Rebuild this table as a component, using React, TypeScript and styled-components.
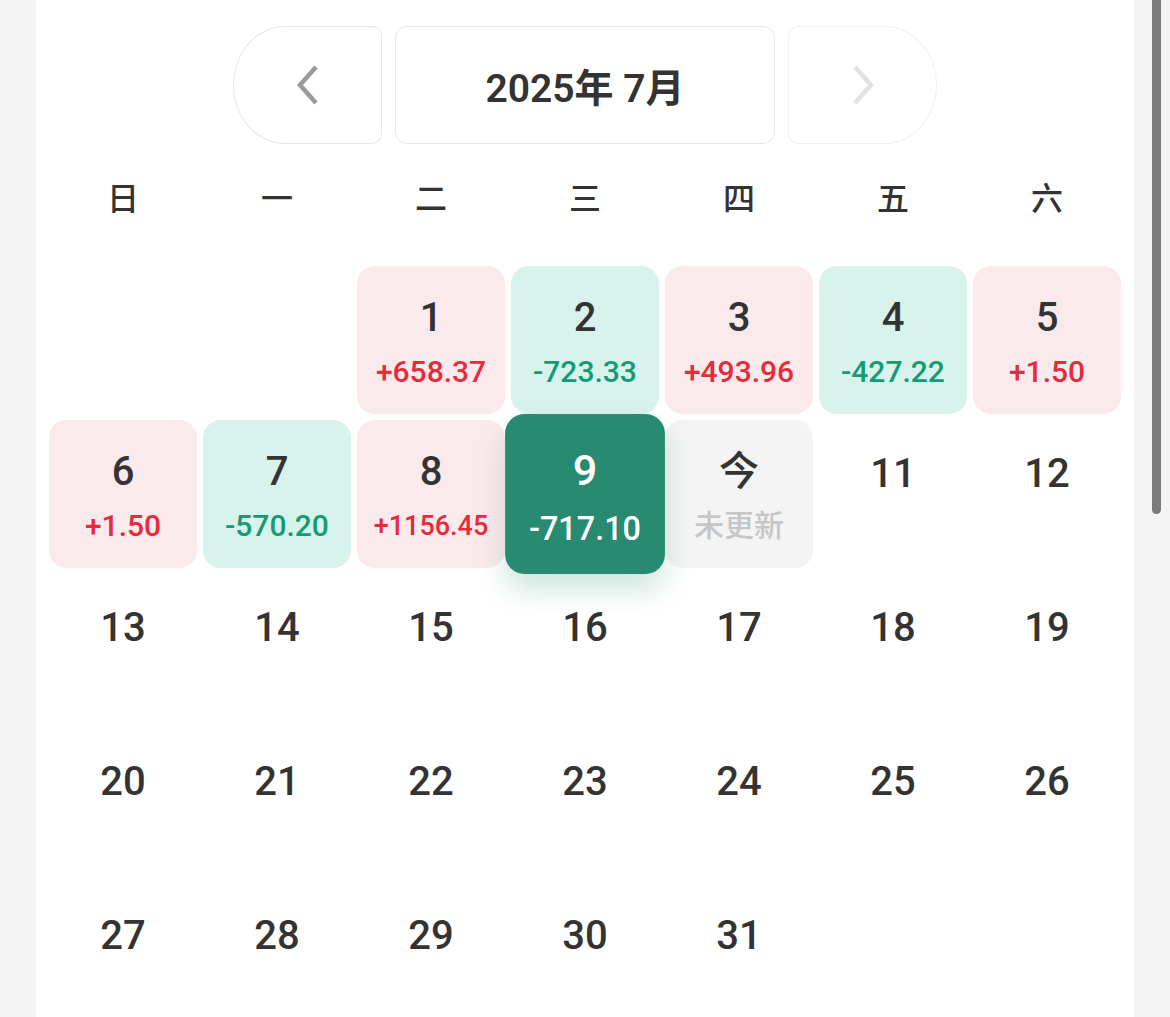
import React from "react";
import styled, { createGlobalStyle, css } from "styled-components";

const Global = createGlobalStyle`
  html, body {
    margin: 0;
    padding: 0;
    background: #f4f4f4;
    overflow: hidden;
  }
  body {
    font-family: Roboto, "Noto Sans CJK SC", "Noto Sans", sans-serif;
    color: #333;
  }
`;

const Page = styled.div`
  display: flex;
  min-height: 1017px;
`;

const Panel = styled.div`
  margin-left: 36px;
  width: 1098px;
  min-height: 1017px;
  background: #fff;
  box-sizing: border-box;
  padding: 26px 13px 0 13px;
`;

const ScrollThumb = styled.div`
  position: fixed;
  left: 1152px;
  top: 0;
  width: 9px;
  height: 514px;
  background: #7b7b7b;
  border-radius: 0 0 5px 5px;
`;

const Header = styled.div`
  display: flex;
  justify-content: center;
  gap: 13px;
  height: 118px;
`;

const NavButton = styled.button<{ $side: "left" | "right"; $disabled?: boolean }>`
  width: 149px;
  height: 118px;
  box-sizing: border-box;
  background: #fff;
  border: 1px solid ${(p) => (p.$disabled ? "#f1f1f1" : "#e6e6e6")};
  padding: 0;
  display: flex;
  align-items: center;
  justify-content: center;
  ${(p) =>
    p.$side === "left"
      ? css`
          border-radius: 52px 10px 10px 52px / 59px 10px 10px 59px;
        `
      : css`
          border-radius: 10px 52px 52px 10px / 10px 59px 59px 10px;
        `}
`;

const Title = styled.div`
  width: 380px;
  height: 118px;
  box-sizing: border-box;
  border: 1px solid #e6e6e6;
  border-radius: 12px;
  display: flex;
  align-items: center;
  justify-content: center;
  font-size: 39px;
  font-weight: 600;
  color: #333;
`;

const Weekdays = styled.div`
  display: grid;
  grid-template-columns: repeat(7, 148px);
  column-gap: 6px;
  margin-top: 26px;
  height: 52px;
`;

const Weekday = styled.div`
  display: flex;
  align-items: center;
  justify-content: center;
  font-size: 32px;
  font-weight: 500;
  color: #333;
`;

const Grid = styled.div`
  display: grid;
  grid-template-columns: repeat(7, 148px);
  grid-auto-rows: 148px;
  gap: 6px;
  margin-top: 44px;
`;

type Tone = "up" | "down" | "today" | "none" | "selected";

const toneBg: Record<Tone, string> = {
  up: "#fbeaeb",
  down: "#d8f3ec",
  today: "#f4f4f4",
  none: "transparent",
  selected: "#288a71",
};

const Cell = styled.div<{ $tone: Tone }>`
  box-sizing: border-box;
  border-radius: 18px;
  background: ${(p) => toneBg[p.$tone]};
  display: flex;
  flex-direction: column;
  align-items: center;
  padding-top: ${(p) => (p.$tone === "none" ? "30px" : "28px")};
  ${(p) =>
    p.$tone === "selected" &&
    css`
      transform: scale(1.08);
      box-shadow: 0 14px 26px rgba(40, 138, 113, 0.22);
      position: relative;
      z-index: 1;
      padding-top: 29px;
    `}
`;

const DayNum = styled.div<{ $light?: boolean }>`
  height: 48px;
  line-height: 48px;
  font-size: 40px;
  font-weight: 500;
  color: ${(p) => (p.$light ? "#fff" : "#333")};
`;

const Amount = styled.div<{ $tone: Tone; $small?: boolean }>`
  margin-top: 10px;
  height: 40px;
  line-height: 40px;
  font-size: ${(p) => (p.$small ? "27px" : "30px")};
  font-weight: 500;
  color: ${(p) =>
    p.$tone === "up"
      ? "#e52b3c"
      : p.$tone === "down"
      ? "#139b73"
      : p.$tone === "selected"
      ? "#fff"
      : "#c6c6c6"};
`;

const Chevron = ({ dir, color }: { dir: "left" | "right"; color: string }) => (
  <svg width="28" height="40" viewBox="0 0 28 40" fill="none">
    <path
      d={dir === "left" ? "M22 2 L6 20 L22 38" : "M6 2 L22 20 L6 38"}
      stroke={color}
      strokeWidth="4.5"
      strokeLinecap="butt"
      strokeLinejoin="miter"
    />
  </svg>
);

type Day = { label: string; tone: Tone; amount?: string };

const days: (Day | null)[] = [
  null,
  null,
  { label: "1", tone: "up", amount: "+658.37" },
  { label: "2", tone: "down", amount: "-723.33" },
  { label: "3", tone: "up", amount: "+493.96" },
  { label: "4", tone: "down", amount: "-427.22" },
  { label: "5", tone: "up", amount: "+1.50" },
  { label: "6", tone: "up", amount: "+1.50" },
  { label: "7", tone: "down", amount: "-570.20" },
  { label: "8", tone: "up", amount: "+1156.45" },
  { label: "9", tone: "selected", amount: "-717.10" },
  { label: "今", tone: "today", amount: "未更新" },
  ...Array.from({ length: 21 }, (_, i) => ({ label: String(i + 11), tone: "none" as Tone })),
];

const weekdays = ["日", "一", "二", "三", "四", "五", "六"];

export default function App() {
  return (
    <>
      <Global />
      <Page>
        <Panel>
          <Header>
            <NavButton $side="left">
              <Chevron dir="left" color="#9a9a9a" />
            </NavButton>
            <Title>2025年 7月</Title>
            <NavButton $side="right" $disabled>
              <Chevron dir="right" color="#e2e2e2" />
            </NavButton>
          </Header>
          <Weekdays>
            {weekdays.map((w) => (
              <Weekday key={w}>{w}</Weekday>
            ))}
          </Weekdays>
          <Grid>
            {days.map((d, i) =>
              d ? (
                <Cell key={i} $tone={d.tone}>
                  <DayNum $light={d.tone === "selected"}>{d.label}</DayNum>
                  {d.amount && (
                    <Amount $tone={d.tone} $small={d.amount.length > 7}>
                      {d.amount}
                    </Amount>
                  )}
                </Cell>
              ) : (
                <Cell key={i} $tone="none" />
              )
            )}
          </Grid>
        </Panel>
        <ScrollThumb />
      </Page>
    </>
  );
}
